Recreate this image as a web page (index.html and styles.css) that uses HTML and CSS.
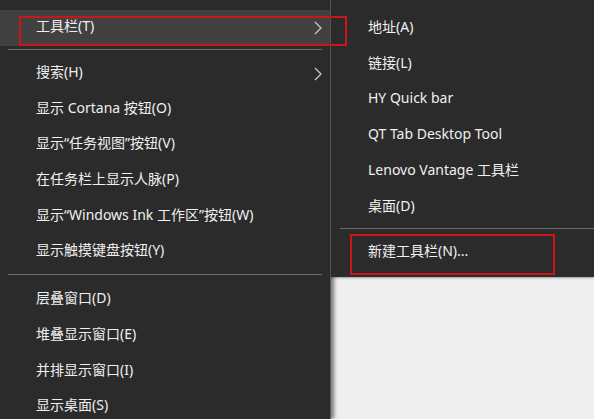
FILE: index.html
```html
<!DOCTYPE HTML>
<html lang="zh-CN">
<head>
  <meta charset="UTF-8">
  <meta name="viewport" content="width=device-width, initial-scale=1.0">
  <title>任务栏菜单</title>
  <link rel="stylesheet" href="styles.css">
</head>
<body>
  <div class="desk">
    <!-- Taskbar context menu -->
    <ul class="menu main-menu">
      <li class="item active"><span>工具栏(T)</span>
        <svg class="chevron" viewBox="0 0 8 14"><path d="M1 1 L7 7 L1 13" /></svg>
      </li>
      <li class="sep"></li>
      <li class="item"><span>搜索(H)</span>
        <svg class="chevron" viewBox="0 0 8 14"><path d="M1 1 L7 7 L1 13" /></svg>
      </li>
      <li class="item"><span>显示 Cortana 按钮(O)</span></li>
      <li class="item"><span>显示“任务视图”按钮(V)</span></li>
      <li class="item"><span>在任务栏上显示人脉(P)</span></li>
      <li class="item"><span>显示“Windows Ink 工作区”按钮(W)</span></li>
      <li class="item"><span>显示触摸键盘按钮(Y)</span></li>
      <li class="sep sep-wide"></li>
      <li class="item"><span>层叠窗口(D)</span></li>
      <li class="item"><span>堆叠显示窗口(E)</span></li>
      <li class="item"><span>并排显示窗口(I)</span></li>
      <li class="item"><span>显示桌面(S)</span></li>
    </ul>

    <!-- Toolbar submenu -->
    <div class="side">
      <ul class="menu sub-menu">
        <li class="item"><span>地址(A)</span></li>
        <li class="item"><span>链接(L)</span></li>
        <li class="item"><span>HY Quick bar</span></li>
        <li class="item"><span>QT Tab Desktop Tool</span></li>
        <li class="item"><span>Lenovo Vantage 工具栏</span></li>
        <li class="item"><span>桌面(D)</span></li>
        <li class="sep"></li>
        <li class="item"><span>新建工具栏(N)...</span></li>
      </ul>
    </div>

    <!-- red highlight frames -->
    <div class="mark mark-toolbar"></div>
    <div class="mark mark-new"></div>
  </div>
</body>
</html>
```

FILE: styles.css
```css
body {
  margin: 0;
  background: #efefef;
  font-family: "Noto Sans", "Noto Sans CJK SC", sans-serif;
  font-size: 14px;
  color: #f0f0f0;
  overflow: hidden;
}
.desk {
  position: relative;
  display: flex;
  height: 100vh;
}
.menu {
  list-style: none;
  margin: 0;
  background: #2b2b2b;
}
.main-menu {
  width: 330px;
  padding: 10px 0 0;
  border-right: 1px solid #5e5e5e;
  box-shadow: 3px 0 4px rgba(0, 0, 0, 0.5);
  position: relative;
  z-index: 1;
}
.side {
  flex: 1;
  display: flex;
  flex-direction: column;
}
.sub-menu {
  padding: 11px 0 6px;
  position: relative;
  z-index: 2;
  box-shadow: 0 1px 2px rgba(0, 0, 0, 0.35);
}
.item {
  box-sizing: border-box;
  height: 35.7px;
  display: flex;
  align-items: center;
  justify-content: space-between;
  padding: 0 8px 5px 36px;
  white-space: nowrap;
}
.sub-menu .item {
  padding-left: 37px;
}
.item.active {
  background: #414141;
}
.chevron {
  width: 8px;
  height: 14px;
  margin-top: 5px;
  fill: none;
  stroke: #cfcfcf;
  stroke-width: 1.2;
}
.sep {
  height: 1px;
  background: #6a6a6a;
  margin: 3px 8px 6px;
}
.sep-wide {
  margin: 4px 8px 7px;
}
.sub-menu .sep {
  margin: 3px 0 6px 9px;
}

/* annotation frames */
.mark {
  position: absolute;
  box-sizing: border-box;
  border: 2px solid #c9161c;
  z-index: 3;
}
.mark-toolbar {
  left: 19px;
  top: 16px;
  width: 328px;
  height: 30px;
}
.mark-new {
  left: 350px;
  top: 234px;
  width: 205px;
  height: 41px;
}
```
